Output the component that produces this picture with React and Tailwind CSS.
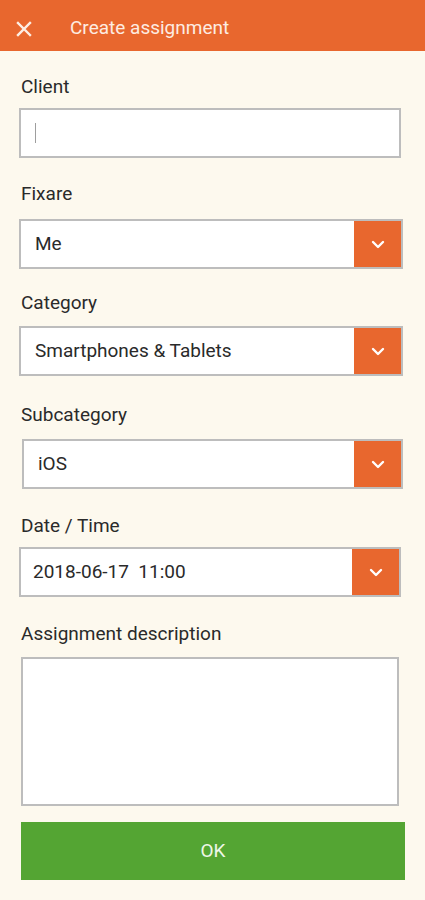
import React from 'react';

const Chevron = () => (
  <svg width="14" height="9" viewBox="0 0 14 9" fill="none" stroke="white" strokeWidth="2.4" strokeLinecap="round" strokeLinejoin="round">
    <path d="M2 2l5 5 5-5" />
  </svg>
);

const Label = ({ children, className = '' }) => (
  <p className={`text-[19px] leading-[22px] text-[#2a2a2a] pl-[21px] ${className}`}>{children}</p>
);

const SelectField = ({ value, className = '', pad = 'pl-[14px]' }) => (
  <div className={`flex h-[50px] border-2 border-[#bdbdbd] bg-white ${className}`}>
    <div className={`flex-1 flex items-center ${pad} text-[19px] text-[#2a2a2a] whitespace-pre`}>{value}</div>
    <div className="w-[47px] bg-[#e8672e] flex items-center justify-center">
      <Chevron />
    </div>
  </div>
);

export default function App() {
  return (
    <div className="w-[425px] h-[900px] bg-[#fdf9ee] flex flex-col" style={{ fontFamily: 'Roboto, "Noto Sans", sans-serif' }}>
      <div className="h-[51px] bg-[#e8672e] flex items-center pt-[6px] shrink-0">
        <svg className="ml-[16px]" width="16" height="16" viewBox="0 0 16 16" stroke="#fdeee4" strokeWidth="2.4" strokeLinecap="square">
          <path d="M2 2l12 12M14 2L2 14" />
        </svg>
        <span className="ml-[38px] text-[19px] text-[#fdece2]">Create assignment</span>
      </div>

      <div className="flex flex-col">
        <Label className="mt-[25px]">Client</Label>
        <div className="mt-[10px] ml-[19px] mr-[24px] h-[50px] border-2 border-[#bdbdbd] bg-white flex items-center pl-[14px]">
          <div className="w-[1px] h-[20px] bg-[#9e9e9e]" />
        </div>

        <Label className="mt-[25px]">Fixare</Label>
        <SelectField value="Me" className="mt-[14px] ml-[19px] mr-[22px]" />

        <Label className="mt-[23px]">Category</Label>
        <SelectField value="Smartphones & Tablets" className="mt-[12px] ml-[19px] mr-[22px]" />

        <Label className="mt-[28px]">Subcategory</Label>
        <SelectField value="iOS" className="mt-[13px] ml-[22px] mr-[22px]" />

        <Label className="mt-[26px]">Date / Time</Label>
        <SelectField value="2018-06-17  11:00" pad="pl-[12px]" className="mt-[10px] ml-[19px] mr-[24px]" />

        <Label className="mt-[26px]">Assignment description</Label>
        <div className="mt-[12px] ml-[21px] mr-[26px] h-[149px] border-2 border-[#bdbdbd] bg-white" />

        <button className="mt-[16px] ml-[21px] mr-[20px] h-[58px] bg-[#54a533] text-[#eef7e8] text-[19px]">OK</button>
      </div>
    </div>
  );
}
